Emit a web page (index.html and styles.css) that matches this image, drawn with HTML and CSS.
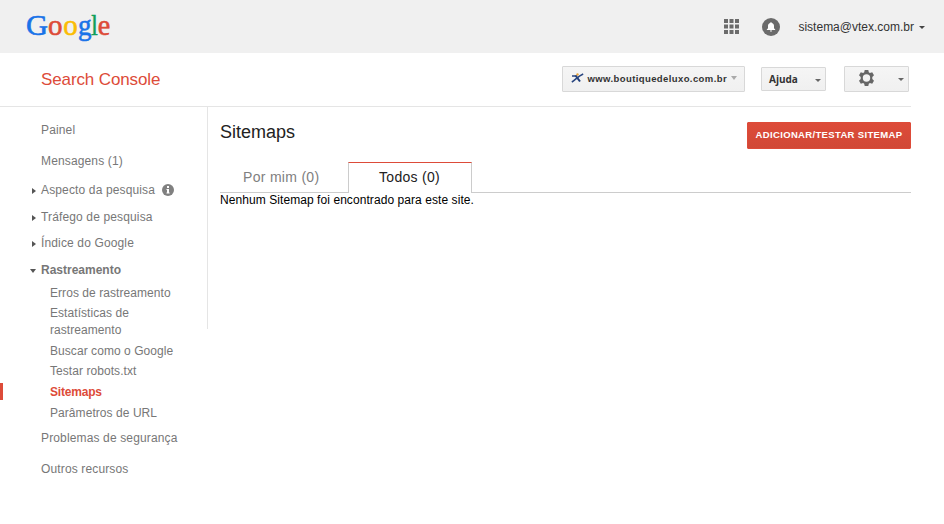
FILE: index.html
```html
<!DOCTYPE html>
<html lang="pt-BR">
<head>
<meta charset="utf-8">
<title>Search Console - Sitemaps</title>
<link rel="stylesheet" href="styles.css">
</head>
<body>
<header class="topbar">
  <svg class="logo" width="88" height="40" viewBox="0 0 88 40" role="img" aria-label="Google">
    <text class="blue" x="0" y="28.500" textLength="22" lengthAdjust="spacingAndGlyphs">G</text>
    <text class="red" x="22" y="28.500" textLength="14.500" lengthAdjust="spacingAndGlyphs">o</text>
    <text class="yellow" x="37.300" y="28.500" textLength="14.500" lengthAdjust="spacingAndGlyphs">o</text>
    <text class="blue" x="51.900" y="28.500" textLength="13.500" lengthAdjust="spacingAndGlyphs">g</text>
    <text class="green" x="65.300" y="28.500" textLength="6.500" lengthAdjust="spacingAndGlyphs">l</text>
    <text class="red" x="71.800" y="28.500" textLength="12.500" lengthAdjust="spacingAndGlyphs">e</text>
  </svg>
  <div class="account">
    <svg class="apps" width="15" height="15" viewBox="0 0 15 15"><path fill="#6b6b6b" d="M0 0h4v4H0zM5.500 0h4v4h-4zM11 0h4v4h-4zM0 5.500h4v4H0zM5.500 5.500h4v4h-4zM11 5.500h4v4h-4zM0 11h4v4H0zM5.500 11h4v4h-4zM11 11h4v4h-4z"/></svg>
    <svg class="bell" width="18" height="18" viewBox="0 0 18 18"><circle cx="9" cy="9" r="9" fill="#6b6b6b"/><path fill="#fff" d="M9 4.200c.6 0 .9.400.9.800C11.500 5.500 12 6.700 12 8v2.200l1.200 1.300v.6H4.800v-.6L6 10.200V8c0-1.300.5-2.500 2.100-3 0-.4.300-.8.900-.8zM7.900 12.600h2.200a1.100 1.100 0 0 1-2.200 0z"/></svg>
    <span class="email">sistema@vtex.com.br</span>
    <span class="caret dark"></span>
  </div>
</header>
<div class="toolbar">
  <h1 class="product">Search Console</h1>
  <div class="controls">
    <div class="btn site">
      <svg width="13" height="10" viewBox="0 0 13 10"><path d="M4.500 2.500 9 8.500" stroke="#1d3b78" stroke-width="2"/><path d="M.8 9C4 7.500 7 3 12.200 1M1 3h5" stroke="#28457f" stroke-width="1.600" fill="none"/><circle cx="6.500" cy="1.500" r="1.200" fill="#e8a33a"/></svg>
      <span class="site-name">www.boutiquedeluxo.com.br</span>
      <span class="caret light"></span>
    </div>
    <div class="btn help"><span>Ajuda</span><span class="caret"></span></div>
    <div class="btn settings">
      <svg width="15" height="16" viewBox="0 0 15 16"><path fill="#666" fill-rule="evenodd" d="M5.700 0h3.600l.5 2.300 1.100.7 2.300-.8L15 5.300 13.300 7v2L15 10.700l-1.800 3.100-2.300-.8-1.100.7-.5 2.300H5.700l-.5-2.300-1.100-.7-2.300.8L0 10.700 1.700 9V7L0 5.300l1.800-3.100 2.300.8 1.100-.7zM7.500 4.300a3.700 3.700 0 1 0 0 7.400 3.700 3.700 0 0 0 0-7.400z"/></svg>
      <span class="caret"></span>
    </div>
  </div>
</div>
<div class="page">
  <nav class="sidebar">
    <ul class="nav">
      <li class="s14">Painel</li>
      <li class="s12">Mensagens (1)</li>
      <li class="s10 closed">Aspecto da pesquisa<svg class="info" width="12" height="12" viewBox="0 0 12 12"><circle cx="6" cy="6" r="6" fill="#808080"/><path fill="#fff" d="M5 2h2v2H5zM4.500 5H7v3.500h.6v1H4.500v-1H5V6h-.5z"/></svg></li>
      <li class="s9 closed">Tráfego de pesquisa</li>
      <li class="s10 closed">Índice do Google</li>
      <li class="s6 open">Rastreamento</li>
      <li class="s3 sub">Erros de rastreamento</li>
      <li class="s4 sub">Estatísticas de<br>rastreamento</li>
      <li class="s3 sub">Buscar como o Google</li>
      <li class="s4 sub">Testar robots.txt</li>
      <li class="s4 sub current">Sitemaps</li>
      <li class="s8 sub">Parâmetros de URL</li>
      <li class="s14">Problemas de segurança</li>
      <li>Outros recursos</li>
    </ul>
  </nav>
  <main class="content">
    <div class="heading">
      <h2>Sitemaps</h2>
      <div class="primary">ADICIONAR/TESTAR SITEMAP</div>
    </div>
    <div class="tabs">
      <div class="tab">Por mim (0)</div>
      <div class="tab active">Todos (0)</div>
    </div>
    <p class="empty">Nenhum Sitemap foi encontrado para este site.</p>
  </main>
</div>
</body>
</html>
```
FILE: styles.css
```css
* { box-sizing: border-box; }
body {
  margin: 0;
  height: 524px;
  overflow: hidden;
  background: #fff;
  color: #222;
  font: 12px/17px "Liberation Sans", Arial, sans-serif;
}
h1, h2, p, ul { margin: 0; padding: 0; font-weight: normal; }
svg { display: block; flex: none; }

.topbar {
  display: flex;
  justify-content: space-between;
  height: 53px;
  padding: 6px 19px 0 26px;
  background: #f0f0f0;
}
.logo { overflow: visible; font: 30px "Liberation Serif", serif; stroke-width: .6; }
.blue { fill: #1a73e8; stroke: #1a73e8; }
.red { fill: #dd4b39; stroke: #dd4b39; }
.yellow { fill: #fbbc05; stroke: #fbbc05; }
.green { fill: #10a05a; stroke: #10a05a; }
.account { display: flex; align-items: center; height: 41px; }
.bell { margin: 0 18px 0 23px; }
.email { margin-top: 1px; color: #333; }
.caret {
  flex: none;
  border: 3px solid transparent;
  border-top-color: #666;
  border-bottom: 0;
}
.caret.dark { margin: 2px 0 0 5px; border-top-color: #444; }
.caret.light { margin-top: -1px; border-width: 4px 3.500px 0; border-top-color: #aaa; }

.toolbar {
  display: flex;
  justify-content: space-between;
  width: 911px;
  height: 54px;
  padding: 13px 2px 0 41px;
  border-bottom: 1px solid #e5e5e5;
}
.product { color: #dd4b39; font-size: 17px; line-height: 27px; letter-spacing: -.12px; }
.controls { display: flex; align-items: flex-start; }
.btn {
  display: flex;
  align-items: center;
  justify-content: space-between;
  height: 26px;
  border: 1px solid #d8d8d8;
  border-radius: 1px;
  background: linear-gradient(#f5f5f5, #f0f0f0);
  color: #333;
  font-weight: bold;
}
.site { width: 183px; padding: 0 7px 2px 8px; font-size: 9.500px; letter-spacing: .4px; }
.site-name { width: 142px; margin-top: 1px; padding-left: 1px; white-space: nowrap; }
.help {
  width: 65px;
  height: 24px;
  margin: 1px 18px 0 16px;
  padding: 1px 4px 0 7px;
  font: bold 10px/15px "Open Sans", sans-serif;
}
.help .caret { margin-top: 2px; }
.settings { width: 65px; padding: 0 4px 2px 14px; }
.settings .caret { margin-top: 2px; }

.page { display: flex; }
.sidebar {
  width: 208px;
  height: 222px;
  padding-top: 15px;
  border-right: 1px solid #e5e5e5;
}
.nav { list-style: none; color: #777; letter-spacing: .14px; }
.nav li { position: relative; display: flex; align-items: center; padding-left: 41px; }
.nav .sub { padding-left: 50px; letter-spacing: .06px; }
.s14 { margin-bottom: 14px; }
.s12 { margin-bottom: 12px; }
.s10 { margin-bottom: 10px; }
.s9 { margin-bottom: 9px; }
.s8 { margin-bottom: 8px; }
.s6 { margin-bottom: 6px; }
.s4 { margin-bottom: 4px; }
.s3 { margin-bottom: 3px; }
.closed::before, .open::before {
  content: "";
  position: absolute;
  border: 3px solid transparent;
}
.closed::before { left: 32px; top: 6px; border-width: 3px 0 3px 4px; border-left-color: #555; }
.open::before { left: 30px; top: 7px; border-width: 4px 3.500px 0; border-top-color: #555; }
.nav .open, .nav .current { font-weight: bold; }
.nav .open { letter-spacing: 0; }
.nav .current { color: #dd4b39; letter-spacing: -.2px; }
.current::before {
  content: "";
  position: absolute;
  left: 0;
  top: -1px;
  width: 3px;
  height: 17px;
  background: #dd4b39;
}
.info { margin: -1px 0 0 7px; }

.content { width: 703px; padding: 15px 0 0 12px; }
.heading { display: flex; justify-content: space-between; height: 40px; }
h2 { font-size: 18px; line-height: 20px; }
.primary {
  width: 164px;
  height: 27px;
  border: 1px solid #dd4b39;
  border-radius: 1px;
  background: linear-gradient(#dd4b39, #d14836);
  color: #fff;
  font-size: 9.500px;
  font-weight: bold;
  line-height: 24px;
  letter-spacing: .34px;
  text-align: center;
  white-space: nowrap;
}
.tabs {
  display: flex;
  height: 31px;
  border-bottom: 1px solid #ccc;
  font-size: 14px;
  line-height: 30px;
  letter-spacing: .3px;
}
.tab { width: 128px; padding-left: 23px; color: #808080; }
.tab.active {
  width: 124px;
  height: 31px;
  padding-left: 30px;
  border: 1px solid #ccc;
  border-top-color: #dd4b39;
  border-bottom: 0;
  background: #fff;
  color: #222;
  line-height: 29px;
}
.empty { color: #000; line-height: 15px; letter-spacing: .07px; }
```
